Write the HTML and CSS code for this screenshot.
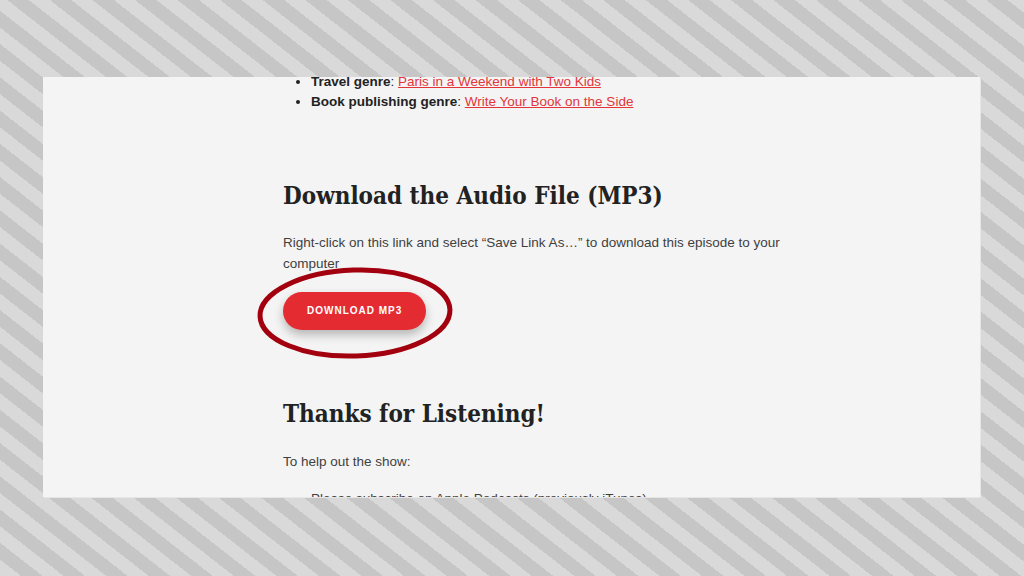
FILE: index.html
```html
<!DOCTYPE html>
<html lang="en">
<head>
  <meta charset="UTF-8" />
  <meta name="viewport" content="width=device-width, initial-scale=1.0" />
  <title>Download the Audio File</title>
  <link rel="stylesheet" href="styles.css">
</head>
<body>
  <div class="frame">
    <article class="post">
      <ul class="genres">
        <li><strong>Travel genre</strong>: <a href="#">Paris in a Weekend with Two Kids</a></li>
        <li><strong>Book publishing genre</strong>: <a href="#">Write Your Book on the Side</a></li>
      </ul>

      <h2>Download the Audio File (MP3)</h2>
      <p>Right-click on this link and select &ldquo;Save Link As&hellip;&rdquo; to download this episode to your computer</p>
      <div class="download">
        <a class="btn" href="#">Download MP3</a>
        <svg class="circle" width="200" height="96" viewBox="0 0 200 96">
          <ellipse cx="100" cy="48" rx="95" ry="43" fill="none" stroke="#a3000f" stroke-width="5" transform="rotate(-2 100 48)" />
        </svg>
      </div>

      <h2 class="thanks">Thanks for Listening!</h2>
      <p>To help out the show:</p>
      <ul class="help">
        <li>Please subscribe on Apple Podcasts (previously iTunes)</li>
        <li>Leave an honest review</li>
      </ul>
    </article>
  </div>
</body>
</html>
```

FILE: styles.css
```css
body {
  margin: 0;
  height: 576px;
  overflow: hidden;
  background: repeating-linear-gradient(38deg, #d9d9d9 0, #d9d9d9 13px, #c6c6c6 13px, #c6c6c6 26.2px);
  font-family: "Liberation Sans", Arial, sans-serif;
  color: #3f3f3f;
}
.frame { margin: 77px 0 0 43px; width: 937px; height: 420px; background: #f4f4f4; overflow: hidden; box-shadow: 1px 1px 0 #e6e6e6; }
.post { width: 500px; margin: -5px 0 0 240px; font-size: 13.5px; line-height: 21px; }

.genres { margin: 0; padding-left: 28px; line-height: 20px; color: #222; }
.post a { color: #e3343a; }
.post strong { color: #222; }

.post h2 { font-family: "DejaVu Serif Condensed", "DejaVu Serif", Georgia, serif; font-stretch: condensed; font-size: 24px; font-weight: bold; color: #222; line-height: 32px; margin: 68px 0 20px; }
.post p { margin: 0; }

.download { position: relative; margin: 18px 0 0; height: 38px; }
.btn { display: inline-block; height: 38px; line-height: 38px; padding: 0 24px; border-radius: 19px; background: #e52b32; color: #fff !important; text-decoration: none; text-transform: uppercase; font-family: "Liberation Sans", Arial, sans-serif; font-weight: bold; font-size: 10px; letter-spacing: 1px; box-shadow: 0 5px 10px rgba(0,0,0,0.25); }
.circle { position: absolute; left: -28px; top: -27px; }

.post h2.thanks { margin-top: 68px; margin-bottom: 21px; }
.help { margin: 16px 0 0; padding-left: 28px; }
```
